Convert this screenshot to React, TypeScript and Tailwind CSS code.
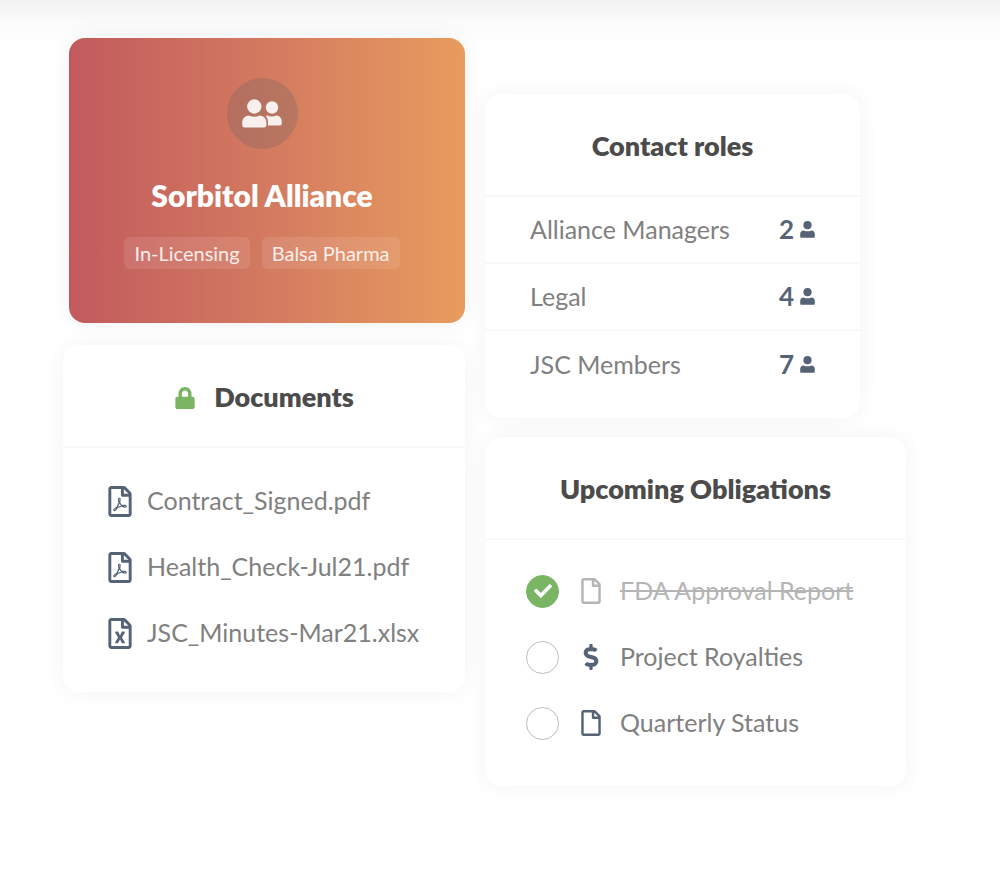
import { useState, type ReactNode } from "react";
import { FaCheck, FaDollarSign, FaLock, FaRegFile, FaRegFileExcel, FaRegFilePdf } from "react-icons/fa";

const tags = ["In-Licensing", "Balsa Pharma"];

const documents = [
  { name: "Contract_Signed.pdf", icon: FaRegFilePdf },
  { name: "Health_Check-Jul21.pdf", icon: FaRegFilePdf },
  { name: "JSC_Minutes-Mar21.xlsx", icon: FaRegFileExcel },
];

const roles = [
  { name: "Alliance Managers", count: 2 },
  { name: "Legal", count: 4 },
  { name: "JSC Members", count: 7 },
];

const obligationsList = [
  { id: "fda", name: "FDA Approval Report", icon: FaRegFile, done: true },
  { id: "royalties", name: "Project Royalties", icon: FaDollarSign, done: false },
  { id: "status", name: "Quarterly Status", icon: FaRegFile, done: false },
];

const UserIcon = () => (
  <svg viewBox="0 0 15 17" className="h-[17px] w-[15px]" fill="currentColor" aria-hidden="true">
    <circle cx="7.5" cy="4.2" r="4.1" />
    <path d="M3.600 9.400c1.200.6 2.500.9 3.900.9s2.700-.3 3.900-.9c2 0 3.400 1.500 3.400 3.500v2.900c0 .6-.4 1-1 1H1.200c-.6 0-1-.4-1-1v-2.900c0-2 1.400-3.500 3.400-3.500z" />
  </svg>
);

const TeamIcon = () => (
  <svg viewBox="0 0 40 29" className="h-[29px] w-[40px]" fill="currentColor" aria-hidden="true">
    <circle cx="12.300" cy="7.500" r="7.200" />
    <circle cx="30" cy="8.500" r="6.200" />
    <path d="M7.200 16.500c1.500.8 3.200 1.200 5.100 1.200s3.600-.4 5.100-1.200c4.100 0 7 3 7 6.900v2.900c0 1.300-1 2.200-2.200 2.200H2.400c-1.300 0-2.200-1-2.200-2.200v-2.900c0-3.900 2.900-6.900 7-6.900z" />
    <path d="M25.800 16.600c1.200.6 2.700.9 4.200.9s3-.3 4.200-.9c3.300.1 5.600 2.800 5.600 6.300v1.600c0 1.200-.9 2-2 2H26v-3.200c0-2.700-.8-4.500-2.300-6.300.6-.3 1.300-.4 2.100-.4z" />
  </svg>
);

interface ICard {
  title: string;
  icon?: ReactNode;
  className?: string;
  children: ReactNode;
}

const Card = ({ title, icon, className = "", children }: ICard) => (
  <section className={`rounded-2xl bg-white shadow-[0_0_22px_rgba(0,0,0,0.05)] ${className}`}>
    <header className="flex h-[103px] items-center justify-center gap-[18px] border-b-2 border-[#f9f9f9] pt-1">
      {icon}
      <h2 className="text-[27px] font-extrabold text-[#4b4b4b]">{title}</h2>
    </header>
    {children}
  </section>
);

const App = () => {
  const [obligations, setObligations] = useState(obligationsList);

  function toggle(id: string) {
    setObligations(obligations.map((item) => (item.id === id ? { ...item, done: !item.done } : item)));
  }

  return (
    <main className="min-h-screen bg-[linear-gradient(#f2f2f2,#fafafa_20px,#ffffff_46px)] pt-[38px] pr-[94px] pb-20 pl-[63px] font-['Lato',sans-serif] text-[25px] text-[#808080]">
      <div className="grid grid-cols-[402fr_421fr] items-start gap-5">
        <div className="flex flex-col gap-[22px]">
          <section className="ml-[6px] flex h-[285px] flex-col items-center rounded-2xl bg-linear-to-r from-[#c25a5d] via-[#d37a60] to-[#e89c5e] pt-10 pr-[10px] text-white shadow-[0_0_22px_rgba(0,0,0,0.06)]">
            <div className="flex size-[71px] items-center justify-center rounded-full bg-[#5f5f5f]/25 text-[#f9efed]">
              <TeamIcon />
            </div>
            <h1 className="mt-[26px] text-[30px] leading-10 font-extrabold">Sorbitol Alliance</h1>
            <ul className="mt-[22px] flex gap-3 text-[20px] text-white/85">
              {tags.map((tag) => (
                <li key={tag} className="flex h-8 items-center rounded-md bg-white/10 px-[10px]">{tag}</li>
              ))}
            </ul>
          </section>

          <Card title="Documents" icon={<FaLock className="size-[22px] text-[#79b562]" />}>
            <ul className="pt-5 pb-[26px]">
              {documents.map(({ name, icon: Icon }) => (
                <li key={name}>
                  <a href="#" className="flex h-[66px] items-center gap-3 pl-[42px]">
                    <Icon className="h-[31px] w-[30px] text-[#566376]" />
                    {name}
                  </a>
                </li>
              ))}
            </ul>
          </Card>
        </div>

        <div className="flex flex-col gap-[19px] pt-14">
          <Card title="Contact roles" className="mr-[46px]">
            <ul className="divide-y-2 divide-[#f9f9f9] pb-5">
              {roles.map((role) => (
                <li key={role.name} className="flex h-[67px] items-center justify-between px-[45px]">
                  <span>{role.name}</span>
                  <span className="flex items-center gap-[6px] text-[26px] font-bold text-[#566376]">
                    {role.count}
                    <UserIcon />
                  </span>
                </li>
              ))}
            </ul>
          </Card>

          <Card title="Upcoming Obligations">
            <ul className="pt-[18px] pb-[30px]">
              {obligations.map(({ id, name, icon: Icon, done }) => (
                <li key={id} className="flex h-[66px] items-center pl-[41px]">
                  <span className="relative flex size-[33px]">
                    <input
                      id={id}
                      type="checkbox"
                      checked={done}
                      onChange={() => toggle(id)}
                      className="size-[33px] appearance-none rounded-full border border-[#bdbdbd] bg-white checked:border-[#79b562] checked:bg-[#79b562]"
                    />
                    {done && <FaCheck className="pointer-events-none absolute inset-0 m-auto size-[18px] text-white" />}
                  </span>
                  <label htmlFor={id} className={`flex items-center ${done ? "text-[#b5b5b5] line-through" : ""}`}>
                    <Icon className={`mr-4 ml-[19px] size-[26px] ${done ? "text-[#b5b5b5]" : "text-[#566376]"}`} />
                    {name}
                  </label>
                </li>
              ))}
            </ul>
          </Card>
        </div>
      </div>
    </main>
  );
};

export default App;
